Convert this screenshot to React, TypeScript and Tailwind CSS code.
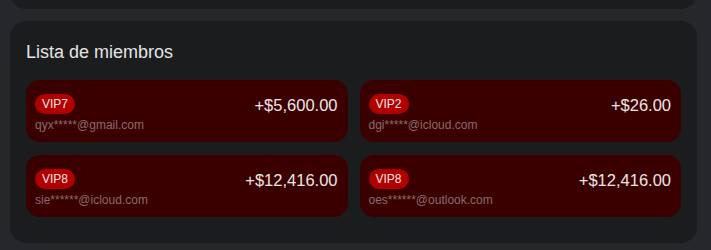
const MEMBERS = [
  { level: 'VIP7', email: 'qyx*****@gmail.com', amount: '+$5,600.00' },
  { level: 'VIP2', email: 'dgi*****@icloud.com', amount: '+$26.00' },
  { level: 'VIP8', email: 'sie******@icloud.com', amount: '+$12,416.00' },
  { level: 'VIP8', email: 'oes******@outlook.com', amount: '+$12,416.00' },
];

function MemberCard({ level, email, amount }: { level: string; email: string; amount: string }) {
  return (
    <div className="h-[62px] rounded-[14px] bg-[#3a0000] pl-[9px] pr-[10px] pt-[12px]">
      <div className="flex items-center justify-between">
        <span className="flex h-[20px] items-center rounded-full bg-[#b00000] px-[7px] text-[12px] text-[#f5e6e6]">
          {level}
        </span>
        <span className="pt-[3px] text-[16.5px] leading-[20px] text-[#f0e4e4]">{amount}</span>
      </div>
      <div className="mt-[3px] text-[12px] leading-[15px] text-[#8a6a6a]">{email}</div>
    </div>
  );
}

export default function App() {
  return (
    <div
      className="h-[250px] w-[711px] overflow-hidden bg-[#26272a]"
      style={{ fontFamily: '"Liberation Sans", Arial, sans-serif' }}
    >
      <div className="ml-[10px] mt-[-20px] h-[29px] w-[687px] rounded-b-[16px] bg-[#1b1c1e]" />
      <div className="ml-[10px] mt-[12px] h-[222px] w-[687px] rounded-[16px] bg-[#1b1c1e] px-[16px] pt-[19px]">
        <h2 className="mb-[16px] text-[18px] leading-[24px] text-[#e4e4e4]">Lista de miembros</h2>
        <div className="grid grid-cols-2 gap-x-[12px] gap-y-[13px]">
          {MEMBERS.map((m, i) => (
            <MemberCard key={i} {...m} />
          ))}
        </div>
      </div>
    </div>
  );
}
